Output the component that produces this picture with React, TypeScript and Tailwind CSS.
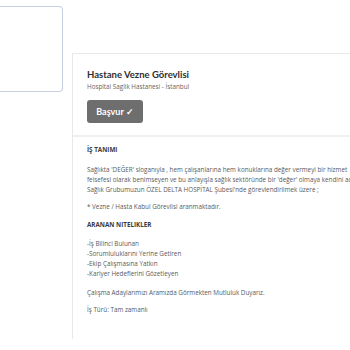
import React from 'react';

const requirements = [
  '-İş Bilinci Bulunan',
  '-Sorumluluklarını Yerine Getiren',
  '-Ekip Çalışmasına Yatkın',
  '-Kariyer Hedeflerini Gözetleyen',
];

const App = () => {
  return (
    <div
      className="flex h-[350px] w-[350px] items-start gap-[9px] overflow-hidden bg-white"
      style={{ fontFamily: 'Lato, "Open Sans", sans-serif' }}
    >
      {/* sol kutu */}
      <aside className="mt-[6px] h-[86px] w-[63px] shrink-0 rounded-r-[4px] border border-l-0 border-[#c9cfe0]" />

      {/* ilan kartı */}
      <main className="mt-[53px] w-[320px] shrink-0 border-t border-l border-[#e8e8e8]">
        <header className="px-[14px] pt-[15px] pb-[12px]">
          <h1 className="text-[9.5px] leading-[12px] font-bold text-[#2f2f2f]">Hastane Vezne Görevlisi</h1>
          <p className="mt-[1px] font-['Open_Sans',sans-serif] text-[6.3px] leading-[10px] text-[#666]">
            Hospital Saglik Hastanesi - İstanbul
          </p>
          <button className="mt-[8px] flex h-[23px] w-[56px] items-center justify-center rounded-[3px] bg-[#6e6e6e] text-[9px] font-bold text-white">
            Başvur ✓
          </button>
        </header>

        <div className="h-[2px] bg-[#f0f0f0]" />

        <article className="px-[14px] pt-[8px] pb-6 font-['Open_Sans',sans-serif] text-[6.3px] leading-[10px] whitespace-nowrap text-[#5a5a5a]">
          <h2 className="font-bold text-[#3a3a3a]">İŞ TANIMI</h2>
          <p className="mt-[10px]">
            Sağlıkta 'DEĞER' sloganıyla , hem çalışanlarına hem konuklarına değer vermeyi bir hizmet
            <br />
            felsefesi olarak benimseyen ve bu anlayışla sağlık sektöründe bir 'değer' olmaya kendini adamış
            <br />
            Sağlık Grubumuzun ÖZEL DELTA HOSPİTAL Şubesi'nde görevlendirilmek üzere ;
          </p>
          <p className="mt-[7px]">* Vezne / Hasta Kabul Görevlisi aranmaktadır.</p>

          <h2 className="mt-[8px] font-bold text-[#3a3a3a]">ARANAN NITELIKLER</h2>
          <ul className="mt-[9px]">
            {requirements.map((item) => (
              <li key={item}>{item}</li>
            ))}
          </ul>

          <p className="mt-[9px]">Çalışma Adaylarımızı Aramızda Görmekten Mutluluk Duyarız.</p>
          <p className="mt-[7px]">İş Türü: Tam zamanlı</p>
        </article>
      </main>
    </div>
  );
};

export default App;
